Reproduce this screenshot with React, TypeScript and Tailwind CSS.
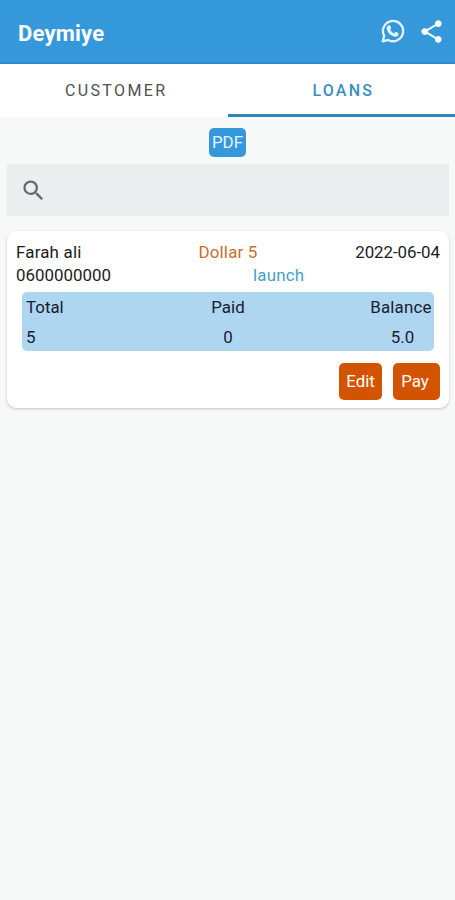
import { MdSearch, MdShare } from "react-icons/md"

interface Loan {
    name: string
    phone: string
    amount: string
    note: string
    date: string
    total: string
    paid: string
    balance: string
}

const loans: Loan[] = [
    {
        name: "Farah ali",
        phone: "0600000000",
        amount: "Dollar 5",
        note: "launch",
        date: "2022-06-04",
        total: "5",
        paid: "0",
        balance: "5.0",
    },
]

function WhatsappIcon() {
    return (
        <svg viewBox="0 0 24 24" className="w-6 h-6 text-[#e3f3fd]" fill="none">
            <path
                d="M1.7 22.3 3.2 17A10.1 10.1 0 1 1 7.1 20.9z"
                stroke="currentColor"
                strokeWidth="2.3"
                strokeLinejoin="round"
            />
            <path
                d="M8.3 6.2c.5 0 .8.1 1 .6l.8 2c.1.4.1.7-.1 1l-.8 1c.9 1.6 2.2 2.8 3.9 3.6l1-1.1c.3-.3.6-.4 1-.2l2 1c.5.2.6.5.5 1-.2 1.8-1.6 2.7-3.2 2.6-4.1-.2-8.5-4.5-8.7-8.2 0-1.8 1-3.2 2.6-3.3z"
                fill="currentColor"
            />
        </svg>
    )
}

function LoanCard({ loan }: { loan: Loan }) {
    return (
        <div className="h-[177px] bg-white rounded-[9px] shadow-[0_1px_3px_rgba(0,0,0,0.22)] pt-[9px] px-[9px]">
            <div className="grid grid-cols-3 h-[23px] leading-6">
                <span className="tracking-[0.2px]">{loan.name}</span>
                <span className="text-center tracking-[0.2px] text-[#c4702f]">{loan.amount}</span>
                <span className="text-right tracking-[-0.05px]">{loan.date}</span>
            </div>
            <div className="flex h-6 leading-6">
                <span className="w-[237px]">{loan.phone}</span>
                <span className="tracking-[0.2px] text-[#4a9fc6]">{loan.note}</span>
            </div>

            {/* Totals */}
            <div className="mt-[5px] mx-[6px] h-[59px] rounded-[5px] bg-[#aed6f1] pl-1 pr-[2px] flex justify-between text-[#17202f]">
                <div className="w-[62px] leading-[30px]">
                    <div>Total</div>
                    <div>{loan.total}</div>
                </div>
                <div className="text-center leading-[30px] pr-[2px]">
                    <div>Paid</div>
                    <div>{loan.paid}</div>
                </div>
                <div className="w-[62px] text-center leading-[30px]">
                    <div className="tracking-[0.2px]">Balance</div>
                    <div className="pl-[3px]">{loan.balance}</div>
                </div>
            </div>

            <div className="mt-3 flex justify-end gap-[11px] text-white">
                <button className="w-[43px] h-[37px] rounded-[5px] bg-[#d35400]">Edit</button>
                <button className="w-[47px] h-[37px] rounded-[5px] bg-[#d35400] pr-[3px]">Pay</button>
            </div>
        </div>
    )
}

export default function App() {
    return (
        <div className="w-full h-[900px] bg-[#f7f9f9] text-[#1c1c1c] text-[16.9px] font-['Roboto',sans-serif]">
            {/* Header */}
            <header className="h-16 bg-[#3498db] border-b-2 border-[#2f8ac8] flex items-center justify-between pl-[18px] pr-[10px] text-white">
                <h1 className="text-[22px] font-bold pt-1 tracking-[0.2px]">Deymiye</h1>
                <div className="flex items-center gap-[13px]">
                    <WhatsappIcon />
                    <MdShare size={27} />
                </div>
            </header>

            {/* Tabs */}
            <nav className="h-[53px] bg-white grid grid-cols-2 text-base">
                <div className="pt-[15px] pl-[5px] text-center tracking-[2.4px] text-[#4f4f4f]">CUSTOMER</div>
                <div className="pt-[15px] pl-[4px] text-center font-medium tracking-[2.2px] text-[#3a8fc0] border-b-3 border-[#2e86b9]">
                    LOANS
                </div>
            </nav>

            <main className="pl-[7px] pr-[6px]">
                <div className="pt-[11px] pr-px flex justify-center">
                    <button className="w-[37px] h-[29px] rounded-[5px] bg-[#3498db] text-[#e6f5ff]">PDF</button>
                </div>

                <div className="mt-[7px] h-[52px] bg-[#ecedee] flex items-center pl-[13px]">
                    <MdSearch size={27} className="text-[#666666]" />
                </div>

                <div className="mt-[15px]">
                    {loans.map(loan => (
                        <LoanCard key={loan.phone} loan={loan} />
                    ))}
                </div>
            </main>
        </div>
    )
}
